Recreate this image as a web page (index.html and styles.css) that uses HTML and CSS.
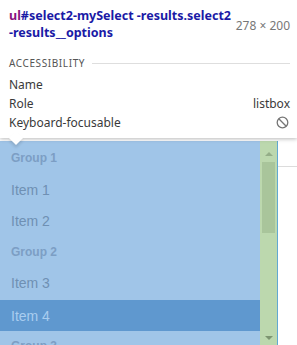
FILE: index.html
```html
<!DOCTYPE html>
<html>
<head>
<meta charset="utf-8">
<link rel="stylesheet" href="styles.css">
</head>
<body>
<div class="page">
  <div class="stage">
    <div class="list">
      <ul class="options">
        <li class="group">Group 1</li>
        <li class="item">Item 1</li>
        <li class="item">Item 2</li>
        <li class="group">Group 2</li>
        <li class="item">Item 3</li>
        <li class="item active">Item 4</li>
        <li class="group">Group 3</li>
      </ul>
      <div class="scrollbar">
        <div class="arrow-up"></div>
        <div class="thumb"></div>
        <div class="track"></div>
        <div class="arrow-down"></div>
      </div>
    </div>
    <div class="side"></div>
  </div>

  <div class="tooltip">
    <div class="title-row">
      <div class="title">
        <div class="line"><span class="tag">ul</span><span class="sel">#select2-mySelect -results.select2</span></div>
        <div class="line"><span class="sel">-results__options</span></div>
      </div>
      <div class="dims">278 × 200</div>
    </div>
    <div class="section">
      <span class="section-label">ACCESSIBILITY</span>
      <span class="section-line"></span>
    </div>
    <div class="prop"><span>Name</span><span></span></div>
    <div class="prop"><span>Role</span><span>listbox</span></div>
    <div class="prop"><span>Keyboard-focusable</span>
      <svg class="no-icon" width="13" height="13" viewBox="0 0 13 13"><circle cx="6.5" cy="6.5" r="5.3" fill="none" stroke="#767676" stroke-width="1.3"/><line x1="2.8" y1="2.8" x2="10.2" y2="10.2" stroke="#767676" stroke-width="1.3"/></svg>
    </div>
    <div class="tip"></div>
  </div>
</div>
</body>
</html>
```

FILE: styles.css
```css
html, body {
  margin: 0;
  padding: 0;
  background: #ffffff;
}
.page {
  position: relative;
  width: 297px;
  height: 345px;
  overflow: hidden;
}
.stage {
  display: flex;
  padding-top: 141px;
}
.list {
  display: flex;
  width: 277px;
  height: 220px;
  border-right: 1px solid #62a9d2;
}
.options {
  list-style: none;
  margin: 0;
  padding: 2.25px 0 0 0;
  width: 260px;
  background: #a0c5e8;
  font-family: "Liberation Sans", Arial, sans-serif;
}
.options li {
  height: 31.25px;
  line-height: 31.25px;
  padding-left: 11px;
  box-sizing: border-box;
}
.group {
  font-size: 12px;
  font-weight: bold;
  color: #7c9ec4;
}
.item {
  font-size: 14px;
  color: #6f90b3;
}
.item.active {
  background: #5f98cf;
  color: #a9cdef;
  padding-top: 1px;
}
.scrollbar {
  width: 17px;
  background: #bcd8ae;
  display: flex;
  flex-direction: column;
  align-items: center;
}
.arrow-up {
  margin-top: 11px;
  width: 0;
  height: 0;
  border-left: 4px solid transparent;
  border-right: 4px solid transparent;
  border-bottom: 4px solid #94ae88;
}
.thumb {
  margin-top: 6px;
  width: 13px;
  height: 71px;
  background: #a9c59b;
}
.track {
  flex: 1;
}
.arrow-down {
  margin-bottom: 21px;
  width: 0;
  height: 0;
  border-left: 4px solid transparent;
  border-right: 4px solid transparent;
  border-top: 4px solid #7d9571;
}
.side {
  flex: 1;
  margin-top: 25px;
  border-top: 1px solid #dcdcdc;
  height: 200px;
}
.tooltip {
  position: absolute;
  left: 0;
  top: 0;
  width: 297px;
  height: 138px;
  box-sizing: border-box;
  padding: 7px 7px 0 9px;
  background: #ffffff;
  box-shadow: 0 1px 4px rgba(0,0,0,0.28);
  font-family: "Noto Sans", "Open Sans", sans-serif;
}
.title-row {
  display: flex;
  justify-content: space-between;
  align-items: center;
}
.title {
  font-weight: bold;
  font-size: 12.5px;
  line-height: 17px;
  white-space: nowrap;
}
.tag { color: #881280; }
.sel { color: #1a1aa6; }
.dims {
  font-size: 12px;
  color: #777777;
  padding-top: 3px;
}
.section {
  display: flex;
  align-items: center;
  margin-top: 15px;
  height: 14px;
}
.section-label {
  font-size: 10px;
  color: #555555;
  letter-spacing: 0.6px;
  margin-right: 7px;
}
.section-line {
  flex: 1;
  border-top: 1px solid #dedede;
}
.prop {
  display: flex;
  justify-content: space-between;
  align-items: center;
  height: 19px;
  font-size: 12px;
  color: #3a3a3a;
}
.section + .prop {
  margin-top: 5px;
}
.no-icon {
  margin-right: 1px;
}
.tip {
  position: absolute;
  left: 11px;
  bottom: -5px;
  width: 10px;
  height: 10px;
  background: #ffffff;
  transform: rotate(45deg);
  box-shadow: 2px 2px 3px rgba(0,0,0,0.12);
}
```
